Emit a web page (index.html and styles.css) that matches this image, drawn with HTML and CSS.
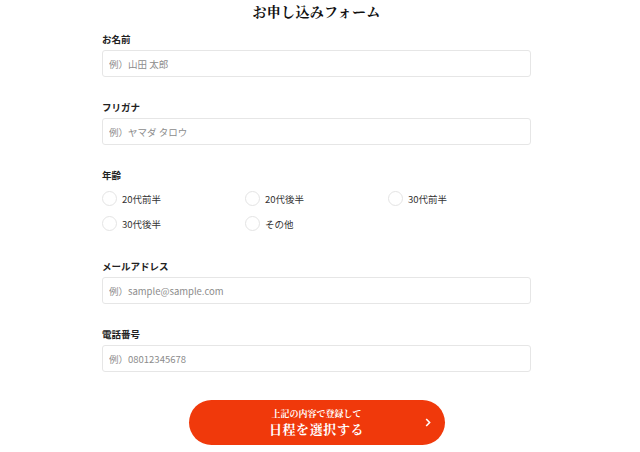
FILE: index.html
```html
<!DOCTYPE html>
<html lang="ja">
<head>
  <meta charset="UTF-8">
  <title>お申し込みフォーム</title>
  <link rel="stylesheet" href="styles.css">
</head>
<body>
<div class="page">
  <h1 class="title">お申し込みフォーム</h1>
  <form class="form">
    <div class="field">
      <label class="label" for="name">お名前</label>
      <input class="input" id="name" type="text" placeholder="例）山田 太郎">
    </div>
    <div class="field">
      <label class="label" for="kana">フリガナ</label>
      <input class="input" id="kana" type="text" placeholder="例）ヤマダ タロウ">
    </div>
    <div class="field">
      <p class="label">年齢</p>
      <div class="radios">
        <label class="radio"><input type="radio" name="age">20代前半</label>
        <label class="radio"><input type="radio" name="age">20代後半</label>
        <label class="radio"><input type="radio" name="age">30代前半</label>
        <label class="radio"><input type="radio" name="age">30代後半</label>
        <label class="radio"><input type="radio" name="age">その他</label>
      </div>
    </div>
    <div class="field">
      <label class="label" for="mail">メールアドレス</label>
      <input class="input" id="mail" type="text" placeholder="例）sample@sample.com">
    </div>
    <div class="field">
      <label class="label" for="tel">電話番号</label>
      <input class="input" id="tel" type="text" placeholder="例）08012345678">
    </div>
    <button class="submit" type="button">
      <span class="submit-sub">上記の内容で登録して</span>
      <span class="submit-main">日程を選択する</span>
      <svg class="submit-arrow" width="6" height="9" viewBox="0 0 6 9">
        <path d="M1.2 1 L4.6 4.5 L1.2 8" fill="none" stroke="#fff" stroke-width="1.6"/>
      </svg>
    </button>
  </form>
</div>
</body>
</html>
```

FILE: styles.css
```css
body {
    margin: 0;
    background-color: #fff;
    color: #222;
    font-family: "Noto Sans CJK JP", "Noto Sans", sans-serif;
}

.page {
    width: 633px;
}

.title {
    margin: 0;
    padding-top: 3px;
    font-family: "Noto Serif CJK JP", "Liberation Serif", "Noto Sans CJK JP", serif;
    font-size: 14px;
    line-height: 16px;
    font-weight: bold;
    text-align: center;
    letter-spacing: 0.3px;
    color: #111;
}

.form {
    width: 429px;
    margin: 13px auto 0;
}

.field {
    margin-bottom: 23px;
}

.label {
    display: block;
    margin: 0 0 4px;
    font-size: 9.5px;
    line-height: 14px;
    font-weight: bold;
    color: #222;
}

.input {
    display: block;
    box-sizing: border-box;
    width: 100%;
    height: 27px;
    margin: 0;
    padding: 0 6px;
    border: 1px solid #e6e6e6;
    border-radius: 3px;
    background-color: #fff;
    font-family: inherit;
    font-size: 9.5px;
    color: #333;
    outline: none;
}

.input::placeholder {
    color: #8c8c8c;
}

.radios {
    display: grid;
    grid-template-columns: repeat(3, 143px);
    margin-top: 4px;
}

.radio {
    display: flex;
    align-items: center;
    height: 25px;
    font-size: 9.5px;
    color: #333;
}

.radio input {
    appearance: none;
    -webkit-appearance: none;
    box-sizing: border-box;
    width: 15px;
    height: 15px;
    margin: 0 5px 0 0;
    border: 1px solid #e4e4e4;
    border-radius: 50%;
    background-color: #fff;
}

.submit {
    position: relative;
    display: flex;
    flex-direction: column;
    align-items: center;
    justify-content: center;
    width: 256px;
    height: 45px;
    margin: 28px auto 0;
    padding: 0;
    border: none;
    border-radius: 23px;
    background-color: #f0390b;
    color: #fff;
    font-family: "Noto Serif CJK JP", "Liberation Serif", "Noto Sans CJK JP", serif;
    font-weight: bold;
    cursor: pointer;
}

.submit-sub {
    font-size: 9px;
    line-height: 12px;
}

.submit-main {
    font-size: 13px;
    line-height: 17px;
    letter-spacing: 0.6px;
}

/* 右側の矢印 */
.submit-arrow {
    position: absolute;
    right: 14px;
    top: 18px;
}
```
